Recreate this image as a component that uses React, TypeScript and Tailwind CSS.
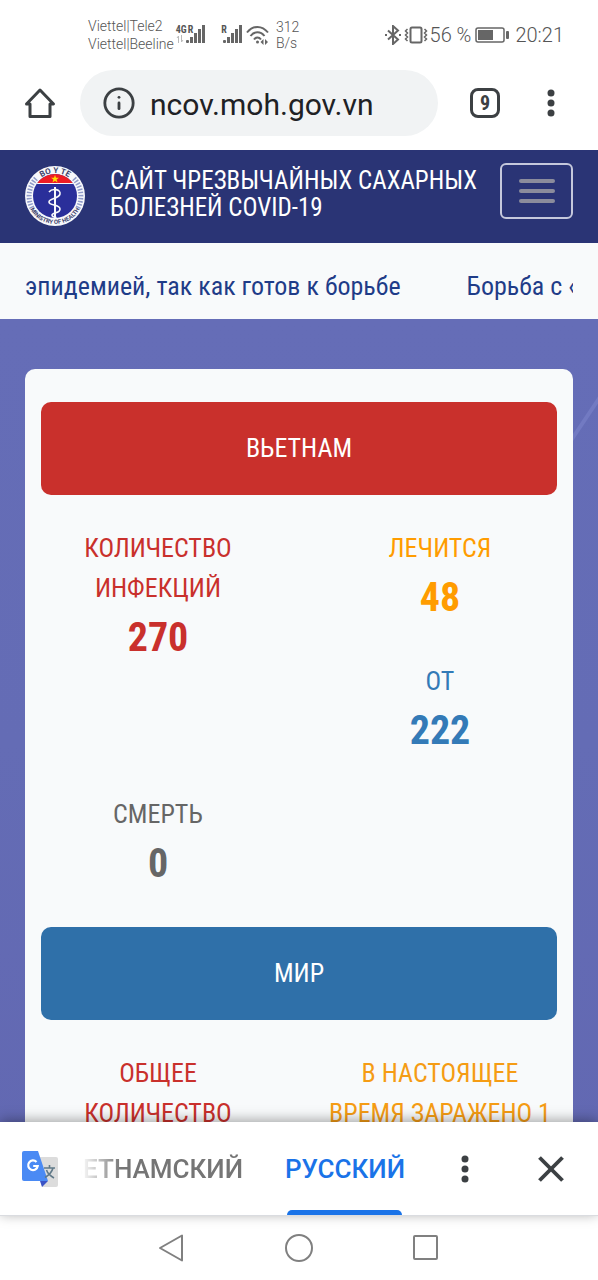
import { Info, X } from "lucide-react";

const VIETNAM = [
  {
    label: "КОЛИЧЕСТВО\nИНФЕКЦИЙ",
    value: "270",
    className: "col-start-1 row-span-2 text-[#c9302c]",
  },
  { label: "ЛЕЧИТСЯ", value: "48", className: "col-start-2 text-[#ff9c00]" },
  { label: "ОТ", value: "222", className: "col-start-2 text-[#337ab7]" },
  { label: "СМЕРТЬ", value: "0", className: "col-start-1 text-[#666666]" },
];

const WORLD = [
  {
    label: "ОБЩЕЕ\nКОЛИЧЕСТВО",
    value: "",
    className: "text-[#c9302c]",
  },
  {
    label: "В НАСТОЯЩЕЕ\nВРЕМЯ ЗАРАЖЕНО 1",
    value: "",
    className: "text-[#f59c14]",
  },
];

type Stat = (typeof VIETNAM)[number];

function SignalBars() {
  return (
    <svg width="19" height="20" viewBox="0 0 19 20" fill="#666">
      <rect x="0" y="15" width="3" height="3" rx="1" />
      <rect x="4" y="12" width="3" height="6" />
      <rect x="8" y="8" width="3" height="10" />
      <rect x="12" y="4" width="3" height="14" />
      <rect x="16" y="0" width="3" height="18" />
    </svg>
  );
}

function StatusBar() {
  return (
    <div className="flex h-[70px] shrink-0 items-center justify-between bg-white pr-[34px] pl-[88px] text-[#555]">
      <div className="flex items-center text-sm leading-[18px]">
        <p className="font-light">
          Viettel|Tele2
          <br />
          Viettel|Beeline
        </p>
        <div className="ml-[2px] flex font-['Roboto_Condensed',sans-serif] text-[10px] leading-[10px] font-bold">
          <div className="w-[11px]">
            <p>4G</p>
            <svg width="9" height="8" viewBox="0 0 9 8" fill="none" stroke="#bbb">
              <path d="M2.500 8V1L1 3M5.500 0v7L7 5" />
            </svg>
          </div>
          <p className="-mr-[7px] ml-px">R</p>
          <SignalBars />
        </div>
        <div className="ml-4 flex font-['Roboto_Condensed',sans-serif] text-[10px] leading-[10px] font-bold">
          <p className="-mr-1">R</p>
          <SignalBars />
        </div>
        <svg
          className="ml-1"
          width="24"
          height="20"
          viewBox="0 0 24 20"
          fill="none"
          stroke="#666"
          strokeWidth="2"
        >
          <path d="M1 7.500C7 0 16 0 22 7.500M4.500 11c4-5 10-5 14 0M8 14.500c2-2.600 5-2.600 7 0" />
          <circle cx="11.500" cy="17" r="1.500" fill="#666" stroke="none" />
          <path
            d="M17.500 14v6l-3-3zM19 14v6l3-3z"
            fill="#666"
            stroke="none"
          />
        </svg>
        <p className="ml-[6px] leading-4 font-light">
          312
          <br />
          B/s
        </p>
      </div>
      <div className="flex items-center text-xl font-light">
        <svg width="18" height="20" viewBox="0 0 18 20" fill="none" stroke="#666" strokeWidth="2">
          <path d="M4 5.500l10 9-5 4.500V1l5 4.500-10 9" />
          <path d="M1 10h2M15 10h2" />
        </svg>
        <svg className="ml-[2px]" width="24" height="18" viewBox="0 0 24 18" fill="none" stroke="#666">
          <rect x="6.500" y="1.500" width="11" height="15" rx="1.500" strokeWidth="2" />
          <path
            d="M3.500 3l-2 2 2 2-2 2 2 2-2 2 2 2M20.500 3l2 2-2 2 2 2-2 2 2 2-2 2"
            strokeWidth="1.500"
          />
        </svg>
        <span className="ml-[2px]">56 %</span>
        <svg className="ml-1" width="34" height="16" viewBox="0 0 34 16">
          <rect
            x="1"
            y="1"
            width="28"
            height="14"
            rx="2"
            fill="none"
            stroke="#666"
            strokeWidth="1.500"
          />
          <rect x="3" y="3" width="15" height="10" fill="#666" />
          <rect x="31" y="4" width="3" height="8" rx="1" fill="#666" />
        </svg>
        <span className="ml-[6px]">20:21</span>
      </div>
    </div>
  );
}

function Dots() {
  return (
    <svg width="8" height="28" viewBox="0 0 8 28" fill="#3c4043">
      <circle cx="4" cy="4" r="3.500" />
      <circle cx="4" cy="14" r="3.500" />
      <circle cx="4" cy="24" r="3.500" />
    </svg>
  );
}

function AddressBar() {
  return (
    <div className="flex h-20 shrink-0 items-start bg-white pr-[43px] pl-6">
      <button type="button" aria-label="Главная" className="mt-[17px]">
        <svg
          width="32"
          height="32"
          viewBox="0 0 32 32"
          fill="none"
          stroke="#3c4043"
          strokeWidth="3"
          strokeLinejoin="round"
        >
          <path d="M6 17H2.500L16 3l13.500 14H26v12.500H6z" />
        </svg>
      </button>
      <div className="ml-6 flex h-[66px] min-w-0 flex-1 items-center rounded-full bg-[#f1f3f4] px-[22px]">
        <Info size={34} strokeWidth={2} color="#3c4043" className="shrink-0" />
        <input
          type="text"
          aria-label="Адрес сайта"
          defaultValue="ncov.moh.gov.vn"
          className="ml-[14px] w-full min-w-0 bg-transparent pt-[2px] text-[30px] text-[#202124] outline-none"
        />
      </div>
      <button
        type="button"
        className="mt-[18px] ml-8 flex size-[30px] items-center justify-center rounded-lg border-3 border-[#3c4043] font-['Roboto_Condensed',sans-serif] text-xl font-bold text-[#3c4043]"
      >
        9
      </button>
      <button type="button" aria-label="Меню браузера" className="mt-[19px] ml-[47px]">
        <Dots />
      </button>
    </div>
  );
}

function Logo() {
  return (
    <svg width="60" height="60" viewBox="0 0 60 60" className="mt-[3px] shrink-0">
      <defs>
        <path id="logo-top" d="M7 30a23 23 0 0 1 46 0" />
        <path id="logo-bottom" d="M2 30a28 28 0 0 0 56 0" />
        <clipPath id="logo-disc">
          <circle cx="30" cy="30" r="22" />
        </clipPath>
      </defs>
      <circle cx="30" cy="30" r="30" fill="#f7f8fb" />
      <path
        d="M11 12.500A26 26 0 0 0 7 42M49 12.500A26 26 0 0 1 53 42"
        fill="none"
        stroke="#8f9bc9"
        strokeWidth="5"
        strokeDasharray="1.500 1.500"
      />
      <g clipPath="url(#logo-disc)">
        <rect width="60" height="60" fill="#2a2f9a" />
        <rect width="60" height="17" fill="#ee1c25" />
        <rect y="17" width="60" height="1" fill="#f7f8fb" />
      </g>
      <path
        d="M30 9l1 2.800h3l-2.400 1.800.900 2.900-2.500-1.700-2.500 1.700.900-2.900-2.400-1.800h3z"
        fill="#ffdd00"
      />
      <path d="M30 21v31" stroke="#f7f8fb" strokeWidth="2" />
      <path
        d="M24 26c3-4 12-3 11 2s-11 4-11 8 11 2 11 7-8 3-8 6 4 1 4 3"
        fill="none"
        stroke="#f7f8fb"
        strokeWidth="1.600"
      />
      <g fontFamily="Roboto, sans-serif" fill="#3b3f6b" textAnchor="middle">
        <text fontSize="8" fontWeight="700">
          <textPath href="#logo-top" startOffset="50%">
            BO Y TE
          </textPath>
        </text>
        <text fontSize="6" fontWeight="700">
          <textPath href="#logo-bottom" startOffset="50%">
            MINISTRY OF HEALTH
          </textPath>
        </text>
      </g>
    </svg>
  );
}

function SiteHeader() {
  return (
    <header className="flex h-[93px] items-start bg-[#2a3475] px-[25px] pt-[13px]">
      <Logo />
      <h1 className="mt-1 ml-[25px] flex-1 text-[25px] leading-[27px] whitespace-nowrap text-white">
        САЙТ ЧРЕЗВЫЧАЙНЫХ САХАРНЫХ
        <br />
        БОЛЕЗНЕЙ COVID-19
      </h1>
      <button
        type="button"
        aria-label="Меню"
        className="flex h-14 w-[73px] flex-col items-center justify-center gap-[6px] rounded-md border-2 border-[#c5c8dc]"
      >
        <span className="h-1 w-9 rounded-full bg-[#8b8c9c]" />
        <span className="h-1 w-9 rounded-full bg-[#8b8c9c]" />
        <span className="h-1 w-9 rounded-full bg-[#8b8c9c]" />
      </button>
    </header>
  );
}

function Ticker() {
  return (
    <div className="h-[76px] bg-[#f8fafb] px-[25px] text-[26px] leading-[86px] whitespace-nowrap text-[#1f3c88]">
      <div className="flex gap-[66px] overflow-hidden">
        <p>эпидемией, так как готов к борьбе</p>
        <p>Борьба с «</p>
      </div>
    </div>
  );
}

function StatItem({ stat }: { stat: Stat }) {
  return (
    <div className={`pb-[33px] text-center ${stat.className}`}>
      <p className="text-[26px] leading-10 whitespace-pre-line">{stat.label}</p>
      <p className="text-[40px] leading-[60px] font-bold">{stat.value}</p>
    </div>
  );
}

function Region({
  title,
  color,
  stats,
}: {
  title: string;
  color: string;
  stats: Stat[];
}) {
  return (
    <section>
      <h2
        className={`mb-[33px] flex h-[93px] items-center justify-center rounded-[10px] text-[26px] text-white ${color}`}
      >
        {title}
      </h2>
      <div className="grid grid-cols-2 gap-x-12">
        {stats.map((stat) => (
          <StatItem key={stat.label} stat={stat} />
        ))}
      </div>
    </section>
  );
}

function TranslateIcon() {
  return (
    <svg width="38" height="38" viewBox="0 0 38 38" className="shrink-0">
      <path d="M16 7h19a2 2 0 0 1 2 2v26a2 2 0 0 1-2 2H21z" fill="#dcdcdc" />
      <path d="M19 31h8l-6 6z" fill="#3a53c5" />
      <path d="M3 1h14l10 30H3a2 2 0 0 1-2-2V3a2 2 0 0 1 2-2z" fill="#4a8af4" />
      <path
        d="M15.500 12a4.800 4.800 0 1 0 1.200 4h-4.500"
        fill="none"
        stroke="#fff"
        strokeWidth="2.200"
      />
      <path
        d="M23 18h11M28.500 15v3M32 18c-1 4-4 7-8 9.500M25.500 20c1 3 4 6 7.500 8"
        fill="none"
        stroke="#607988"
        strokeWidth="1.600"
      />
    </svg>
  );
}

function TranslateBar() {
  return (
    <div className="relative flex h-[94px] shrink-0 items-center border-b border-[#dadce0] bg-white pr-6 pl-[21px] text-[26px] font-medium shadow-[0_-2px_12px_rgba(0,0,0,0.35)]">
      <TranslateIcon />
      <div className="ml-[22px] flex h-full flex-1 justify-between">
        <div className="flex h-full w-[162px] justify-end overflow-hidden mask-[linear-gradient(to_right,transparent,black_40px)]">
          <button type="button" className="shrink-0 pt-[2px] whitespace-nowrap text-[#757575]">
            ВЬЕТНАМСКИЙ
          </button>
        </div>
        <button
          type="button"
          className="flex h-full flex-col items-center whitespace-nowrap text-[#1a73e8]"
        >
          <span className="flex flex-1 items-center pt-[6px]">РУССКИЙ</span>
          <span className="h-[5px] w-[115px] rounded-t-md bg-[#1a73e8]" />
        </button>
      </div>
      <button type="button" aria-label="Параметры перевода" className="ml-14">
        <Dots />
      </button>
      <button type="button" aria-label="Закрыть" className="ml-[59px]">
        <X size={46} strokeWidth={2} color="#3c4043" strokeLinecap="butt" />
      </button>
    </div>
  );
}

function NavBar() {
  return (
    <nav className="flex h-16 shrink-0 items-center justify-center gap-[100px] bg-white">
      <button type="button" aria-label="Назад">
        <svg width="27" height="28" viewBox="0 0 27 28" fill="none" stroke="#808080" strokeWidth="2" strokeLinejoin="round">
          <path d="M24 1.500v25L2 14z" />
        </svg>
      </button>
      <button type="button" aria-label="Домой">
        <svg width="28" height="28" viewBox="0 0 28 28" fill="none" stroke="#808080" strokeWidth="2">
          <circle cx="14" cy="14" r="13" />
        </svg>
      </button>
      <button type="button" aria-label="Недавние">
        <svg width="27" height="28" viewBox="0 0 27 28" fill="none" stroke="#808080" strokeWidth="2">
          <rect x="1" y="2" width="23" height="23" rx="1" />
        </svg>
      </button>
    </nav>
  );
}

export default function App() {
  return (
    <div className="flex h-screen flex-col overflow-hidden bg-white font-[Roboto,sans-serif]">
      <StatusBar />
      <AddressBar />
      <main className="min-h-0 flex-1 overflow-hidden bg-[#656db7] font-['Roboto_Condensed',Roboto,sans-serif]">
        <SiteHeader />
        <Ticker />
        <div className="relative bg-linear-to-b from-[#656db7] via-[#646cb5] to-[#6268b2] px-[25px] pt-[50px]">
          {/* faint streak of the page backdrop */}
          <svg
            className="absolute top-[76px] right-0"
            width="40"
            height="60"
            viewBox="0 0 40 60"
            fill="none"
            stroke="#7880c8"
            strokeWidth="4"
            opacity="0.7"
          >
            <path d="M10 50L42 2" />
          </svg>
          <div className="relative rounded-[10px] bg-[#f8fafb] px-4 pt-[33px]">
            <Region title="ВЬЕТНАМ" color="bg-[#c9302c]" stats={VIETNAM} />
            <Region title="МИР" color="bg-[#2f70a9]" stats={WORLD} />
          </div>
        </div>
      </main>
      <TranslateBar />
      <NavBar />
    </div>
  );
}
